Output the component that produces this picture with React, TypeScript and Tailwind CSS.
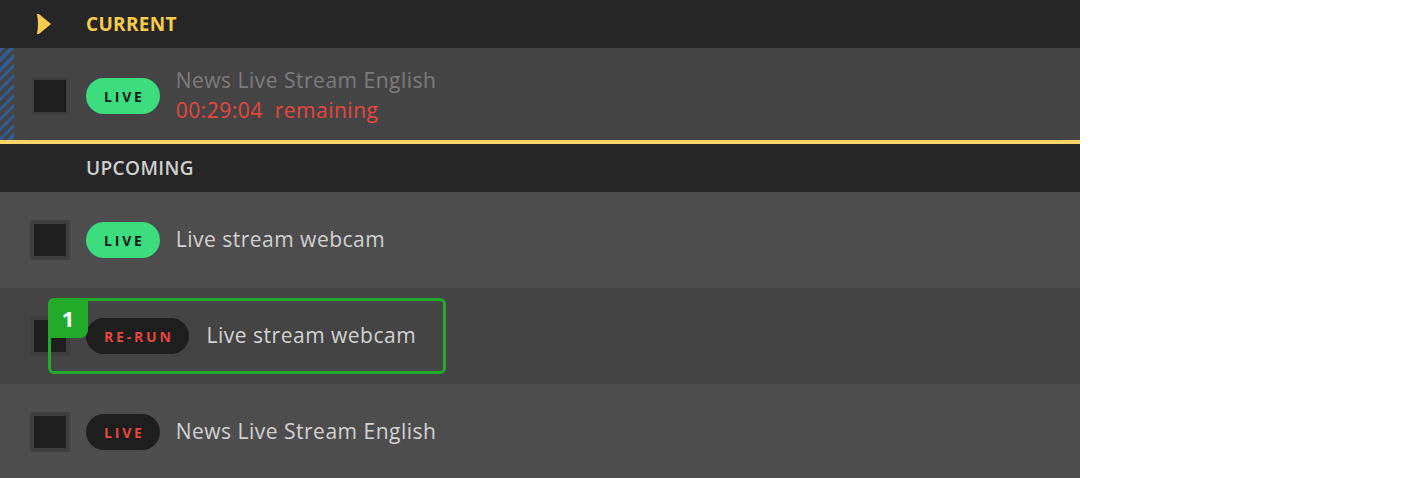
type BadgeKind = "live" | "offline" | "rerun";

function Badge({ kind, label }: { kind: BadgeKind; label: string }) {
  const tone =
    kind === "live"
      ? "bg-[#3ddc7e] text-[#1a1a1a]"
      : "bg-[#1e1e1e] text-[#e8453c]";
  return (
    <span
      className={`flex h-[36px] shrink-0 items-center justify-center rounded-full pl-[18px] pr-[15px] text-[14px] font-bold tracking-[0.2em] ${tone}`}
    >
      {label}
    </span>
  );
}

function Check() {
  return (
    <div className="flex h-[40px] w-[40px] shrink-0 items-center justify-center rounded-[3px] bg-[#3e3e3e]">
      <div className="h-[32px] w-[32px] bg-[#1e1e1e]" />
    </div>
  );
}

function Row({
  bg,
  kind,
  label,
  title,
  highlight,
}: {
  bg: string;
  kind: BadgeKind;
  label: string;
  title: string;
  highlight?: number;
}) {
  return (
    <div className={`relative flex h-[96px] items-center ${bg}`}>
      <div className="flex items-center pl-[30px]">
        <Check />
        <div className={`ml-[16px] flex items-center ${highlight ? "gap-[18px]" : "gap-[16px]"}`}>
          <Badge kind={kind} label={label} />
          <span className="text-[21px] tracking-[0.5px] text-[#d2d2d2]">{title}</span>
        </div>
      </div>
      {highlight ? (
        <div className="absolute left-[48px] top-[10px] h-[76px] w-[398px] rounded-[6px] border-[3px] border-[#22aa2a]">
          <div className="absolute -left-[3px] -top-[3px] flex h-[40px] w-[40px] items-center justify-center rounded-tl-[6px] rounded-br-[8px] bg-[#22aa2a] text-[22px] font-bold text-white">
            {highlight}
          </div>
        </div>
      ) : null}
    </div>
  );
}

export default function App() {
  return (
    <div className="w-[1080px] font-['Open_Sans',sans-serif]">
      <div className="flex h-[48px] items-center bg-[#262626]">
        <svg className="ml-[36px]" width="16" height="22" viewBox="0 0 16 22">
          <path d="M1 1 L3 1 L15 11 L3 21 L1 21 Q3 11 1 1 Z" fill="#f7cb4d" />
        </svg>
        <span className="ml-[34px] text-[19px] font-bold tracking-[0.3px] text-[#f7cb4d]">CURRENT</span>
      </div>

      <div className="flex h-[92px] items-center bg-[#444444] pt-[4px]">
        <div className="-mt-[4px] h-[92px] w-[14px] bg-[repeating-linear-gradient(135deg,#2f5b96_0px,#2f5b96_3px,#444444_3px,#444444_7px)]" />
        <div className="ml-[20px] h-[32px] w-[32px] bg-[#1e1e1e] outline-2 outline-[#3e3e3e]" />
        <div className="ml-[20px] flex items-center gap-[16px]">
          <Badge kind="live" label="LIVE" />
          <div className="-mt-[2px] flex flex-col leading-[30px]">
            <span className="text-[21px] tracking-[0.5px] text-[#7c7c7c]">News Live Stream English</span>
            <span className="text-[21px] tracking-[0.5px] text-[#e8453c]">
              00:29:04&nbsp; remaining
            </span>
          </div>
        </div>
      </div>

      <div className="h-[4px] bg-[#ffd466]" />

      <div className="flex h-[48px] items-center bg-[#262626]">
        <span className="ml-[86px] text-[19px] font-semibold tracking-[0.4px] text-[#d0d0d0]">UPCOMING</span>
      </div>

      <Row bg="bg-[#4d4d4d]" kind="live" label="LIVE" title="Live stream webcam" />
      <Row bg="bg-[#444444]" kind="rerun" label="RE-RUN" title="Live stream webcam" highlight={1} />
      <Row bg="bg-[#4d4d4d]" kind="offline" label="LIVE" title="News Live Stream English" />
    </div>
  );
}
